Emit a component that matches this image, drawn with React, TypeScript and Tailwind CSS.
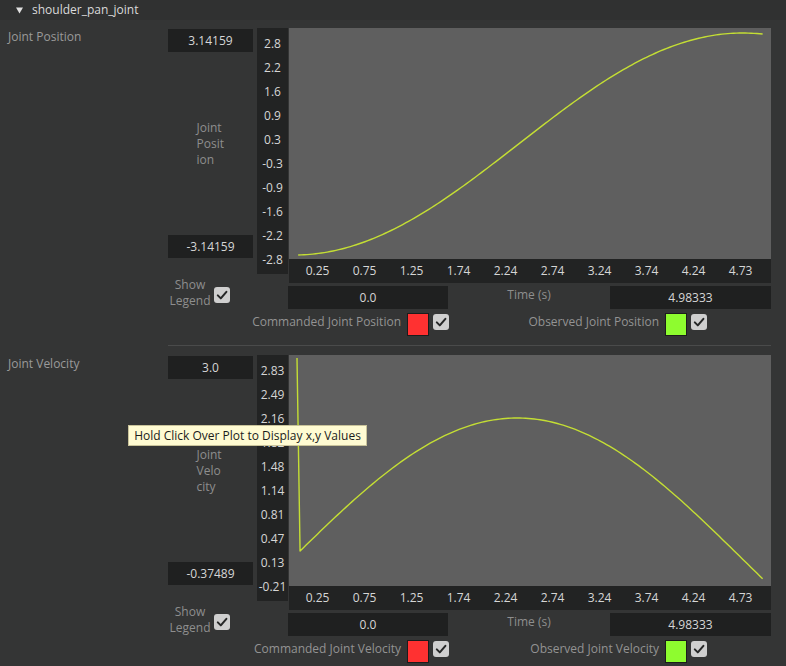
import React from "react";

const PLOT_W = 482;
const PLOT_H = 231;

// time (s) -> x inside the plot
const tx = (t: number) => 5.4 + 94.4 * t;

function buildPath(fn: (t: number) => number, t0: number, t1: number, prefix = "") {
  const pts: string[] = [];
  const steps = 160;
  for (let i = 0; i <= steps; i++) {
    const t = t0 + ((t1 - t0) * i) / steps;
    pts.push(`${tx(t).toFixed(2)},${fn(t).toFixed(2)}`);
  }
  return `${prefix}${prefix ? " L" : "M"}${pts.join(" L")}`;
}

const positionPath = buildPath(
  (t) => 116 + 111 * Math.cos((Math.PI * t) / 4.75),
  0.04,
  4.96,
);

const velocityPath = buildPath(
  (t) => 203.1 - 140.1 * Math.cos(0.661 * (t - 2.36)),
  0.06,
  4.96,
  "M8,3",
);

const X_TICKS = ["0.25", "0.75", "1.25", "1.74", "2.24", "2.74", "3.24", "3.74", "4.24", "4.73"];

function Checkbox() {
  return (
    <svg width="16" height="16" viewBox="0 0 16 16" className="shrink-0">
      <rect x="0" y="0" width="16" height="16" rx="3" fill="#cfcfcf" />
      <path d="M3.8 8.4 L6.8 11.4 L12.4 4.8" fill="none" stroke="#262727" strokeWidth="2" strokeLinecap="round" strokeLinejoin="round" />
    </svg>
  );
}

function ValueBox({ value, width }: { value: string; width: string }) {
  return (
    <div className={`${width} flex h-[23px] items-center justify-center bg-[#1f2020] leading-4 text-[#d6d6d6]`}>
      {value}
    </div>
  );
}

function LegendItem({ text, color, width }: { text: string; color: string; width: string }) {
  return (
    <div className={`${width} flex items-start justify-end`}>
      <span className="mt-px leading-4 text-[#939393]">{text}</span>
      <span className={`ml-[6px] h-[23px] w-[22px] border border-[#1c1c1c] ${color}`} />
      <span className="mt-px ml-[4px]">
        <Checkbox />
      </span>
    </div>
  );
}

type PlotProps = {
  label: string;
  maxValue: string;
  minValue: string;
  yLabel: string[];
  yTicks: string[];
  path: string;
  legendA: string;
  legendB: string;
  legendAWidth: string;
  legendBWidth: string;
};

function PlotSection({ label, maxValue, minValue, yLabel, yTicks, path, legendA, legendB, legendAWidth, legendBWidth }: PlotProps) {
  return (
    <div className="flex">
      <div className="w-[168px] pt-px pl-2 leading-4 text-[#9a9a9a]">{label}</div>
      <div className="w-[603px]">
        <div className="flex items-start">
          <div className="mt-px flex h-[229px] w-[85px] flex-col justify-between">
            <ValueBox value={maxValue} width="w-[85px]" />
            <div className="mx-auto w-[28px] leading-4 text-[#8e8e8e]">
              {yLabel.map((l) => (
                <div key={l}>{l}</div>
              ))}
            </div>
            <ValueBox value={minValue} width="w-[85px]" />
          </div>
          <div className="ml-[4px] flex h-[246px] w-[31px] flex-col bg-[#222323] pt-[4px] text-[#d6d6d6]">
            {yTicks.map((v) => (
              <div key={v} className="flex h-[24px] items-center justify-center">
                {v}
              </div>
            ))}
          </div>
          <div className="ml-px flex-1">
            <div className="h-[231px] bg-[#5f5f5f]">
              <svg width={PLOT_W} height={PLOT_H} viewBox={`0 0 ${PLOT_W} ${PLOT_H}`}>
                <path d={path} fill="none" stroke="#c4de34" strokeWidth="1.4" strokeLinejoin="round" />
              </svg>
            </div>
            <div className="flex h-[24px] items-center bg-[#222323] pl-[5px] text-[#d6d6d6]">
              {X_TICKS.map((v) => (
                <div key={v} className="w-[47px] text-center">
                  {v}
                </div>
              ))}
            </div>
          </div>
        </div>

        <div className="mt-[3px] flex items-start">
          <div className="w-[120px]">
            <div className="-mt-[9px] flex items-center">
              <div className="w-[44px] text-center leading-4 text-[#8e8e8e]">
                <div>Show</div>
                <div>Legend</div>
              </div>
              <span className="mt-[4px] ml-[2px]">
                <Checkbox />
              </span>
            </div>
          </div>
          <ValueBox value="0.0" width="w-[160px]" />
          <div className="flex-1 pt-px text-center leading-4 text-[#8e8e8e]">Time (s)</div>
          <ValueBox value="4.98333" width="w-[161px]" />
        </div>

        <div className="mt-[4px] flex">
          <LegendItem text={legendA} color="bg-[#ff3131]" width={legendAWidth} />
          <LegendItem text={legendB} color="bg-[#8efc2f]" width={legendBWidth} />
        </div>
      </div>
    </div>
  );
}

export default function App() {
  return (
    <div className="relative h-[666px] w-[786px] overflow-hidden bg-[#343535] font-['Open_Sans',sans-serif] text-[12px]">
      <div className="flex h-[20px] items-center bg-[#303131] pl-4">
        <svg width="7" height="7" viewBox="0 0 7 7">
          <polygon points="0,0.5 7,0.5 3.5,6.5" fill="#e0e0e0" />
        </svg>
        <span className="ml-[9px] leading-4 text-[#dadada]">shoulder_pan_joint</span>
      </div>

      <div className="pt-[8px]">
        <PlotSection
          label="Joint Position"
          maxValue="3.14159"
          minValue="-3.14159"
          yLabel={["Joint", "Posit", "ion"]}
          yTicks={["2.8", "2.2", "1.6", "0.9", "0.3", "-0.3", "-0.9", "-1.6", "-2.2", "-2.8"]}
          path={positionPath}
          legendA="Commanded Joint Position"
          legendB="Observed Joint Position"
          legendAWidth="w-[281px]"
          legendBWidth="w-[258px]"
        />
      </div>

      <div className="mt-[9px] ml-[168px] h-px w-[603px] bg-[#4a4b4b]" />

      <div className="pt-[9px]">
        <PlotSection
          label="Joint Velocity"
          maxValue="3.0"
          minValue="-0.37489"
          yLabel={["Joint", "Velo", "city"]}
          yTicks={["2.83", "2.49", "2.16", "1.82", "1.48", "1.14", "0.81", "0.47", "0.13", "-0.21"]}
          path={velocityPath}
          legendA="Commanded Joint Velocity"
          legendB="Observed Joint Velocity"
          legendAWidth="w-[281px]"
          legendBWidth="w-[258px]"
        />
      </div>

      <div className="absolute top-[425px] left-[128px] flex h-[21px] w-[239px] items-center justify-center border border-[#c9c39a] bg-[#fffbd2] leading-4 text-[#1b1b1b]">
        Hold Click Over Plot to Display x,y Values
      </div>
    </div>
  );
}
